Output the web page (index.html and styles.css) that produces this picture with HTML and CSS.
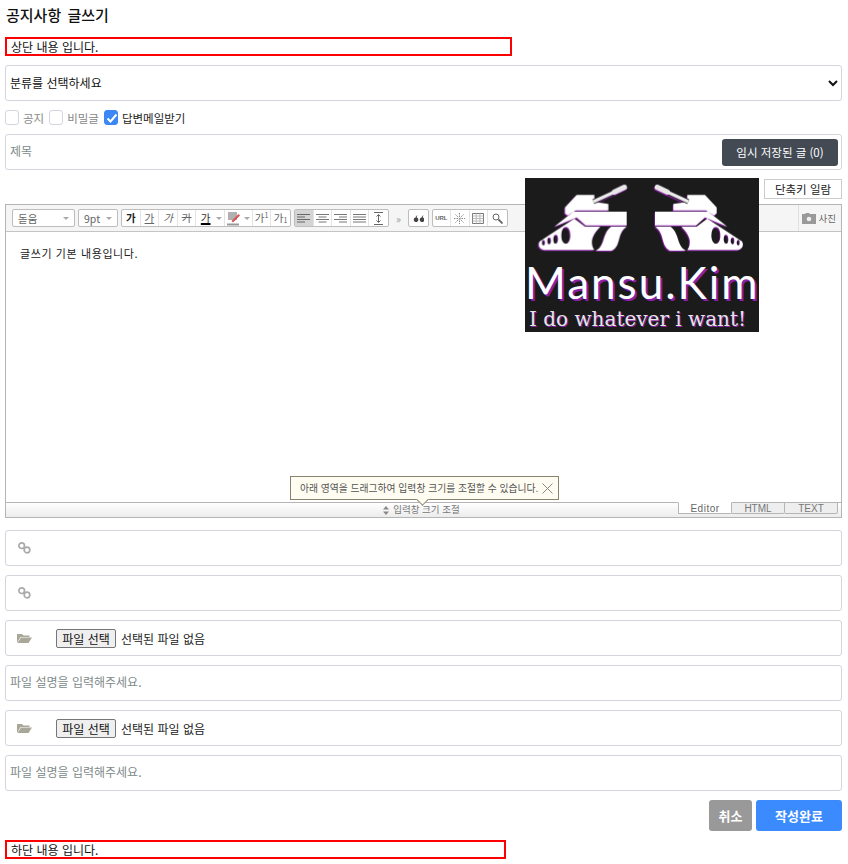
FILE: index.html
```html
<!DOCTYPE html>
<html lang="ko">
<head>
    <meta charset="UTF-8">
    <title>공지사항 글쓰기</title>
    <link rel="stylesheet" href="styles.css">
</head>
<body>
    <svg class="sprites" width="0" height="0">
        <defs>
            <g id="link-icon" fill="none" stroke="#aaa" stroke-width="1.700">
                <circle cx="3.700" cy="3.700" r="2.800"/>
                <circle cx="9" cy="8" r="2.800"/>
            </g>
            <path id="folder-icon" d="M0 1h5l1.500 1.500h6v1.500h-9l-3.500 6zM0.500 10l3.500-5.500h11l-3.500 5.500z" fill="#a9a79a"/>
            <g id="tank">
                <path d="M120 106V88L155 51H208V72L250 78V97H152L128 112Z" fill="#fff"/>
                <path d="M205 71L272 40" stroke="#1b1b1b" stroke-width="15"/>
                <path d="M205 71L272 40" stroke="#eee" stroke-width="10"/>
                <path d="M268 42L298 28" stroke="#e8e8e8" stroke-width="16" stroke-linecap="round"/>
                <path d="M88 146L145 101H305V142H182L155 118Z" fill="#fff"/>
                <path fill-rule="evenodd" fill="#fff" d="M44 190L148 122L180 146H226C200 170 194 196 208 216H58C42 214 38 200 44 190ZM123 147C113 147 109 160 109 174C109 188 115 197 122 197C130 197 136 186 136 172C136 158 131 147 123 147ZM92 170C87 170 85 177 85 184C85 192 87 197 92 197C97 197 99 190 99 183C99 176 97 170 92 170ZM72 178C68 178 67 183 67 189C67 195 69 199 72 199C76 199 78 194 78 188C78 183 76 178 72 178ZM55 186C52 186 51 190 51 194C51 199 52 202 55 202C58 202 60 198 60 193C60 189 58 186 55 186Z"/>
                <path d="M305 146H258C230 168 242 204 212 218H260C290 204 274 166 305 146Z" fill="#fff"/>
            </g>
        </defs>
    </svg>

    <div class="logo-overlay">
        <svg class="logo-tanks" viewBox="0 0 702 240">
            <g class="tank-shadow">
                <use href="#tank"/>
                <use href="#tank" transform="translate(695 0) scale(-1 1)"/>
            </g>
        </svg>
        <div class="logo-name">Mansu.Kim</div>
        <div class="logo-slogan">I do whatever i want!</div>
    </div>

    <main class="write-page">
        <h1 class="page-title">공지사항 글쓰기</h1>
        <div class="notice-box top-box">상단 내용 입니다.</div>

        <select class="field category-select">
            <option>분류를 선택하세요</option>
        </select>

        <div class="check-row">
            <label class="check-item"><span class="check"></span>공지</label>
            <label class="check-item"><span class="check"></span>비밀글</label>
            <label class="check-item on">
                <span class="check checked">
                    <svg width="16" height="16" viewBox="0 0 16 16"><path d="M3.500 8.500l3 3 6-7" fill="none" stroke="#fff" stroke-width="2"/></svg>
                </span>답변메일받기
            </label>
        </div>

        <div class="field subject-row">
            <input class="plain-input subject-input" type="text" placeholder="제목">
            <button class="temp-btn" type="button">임시 저장된 글 (0)</button>
        </div>

        <div class="shortcut-row">
            <button class="shortcut-btn" type="button">단축키 일람</button>
        </div>

        <section class="editor">
            <div class="toolbar">
                <div class="tool-select font-select">돋움<span class="caret"></span></div>
                <div class="tool-select size-select">9pt<span class="caret"></span></div>
                <div class="tool-group">
                    <span class="tool bold">가</span>
                    <span class="tool underline">가</span>
                    <span class="tool italic">가</span>
                    <span class="tool strike">가</span>
                    <span class="tool color-under">가</span>
                    <span class="drop"><span class="caret"></span></span>
                    <span class="tool no-line">
                        <svg width="15" height="15" viewBox="0 0 15 15"><path d="M2 1h9v8H2z" fill="#b0b0b0"/><path d="M5.500 10l7-7 1.500 1.500-7 7z" fill="#d9534f"/><path d="M1 12.500h12v2H1z" fill="#999"/></svg>
                    </span>
                    <span class="drop"><span class="caret"></span></span>
                    <span class="tool">가<sup>1</sup></span>
                    <span class="tool">가<sub>1</sub></span>
                </div>
                <div class="tool-group">
                    <span class="tool pressed"><svg width="13" height="11" viewBox="0 0 13 11"><path d="M0 1.500h13M0 4h8M0 6.500h13M0 9h8" stroke="#666"/></svg></span>
                    <span class="tool"><svg width="13" height="11" viewBox="0 0 13 11"><path d="M0 1.500h13M2.500 4h8M0 6.500h13M2.500 9h8" stroke="#777"/></svg></span>
                    <span class="tool"><svg width="13" height="11" viewBox="0 0 13 11"><path d="M0 1.500h13M5 4h8M0 6.500h13M5 9h8" stroke="#777"/></svg></span>
                    <span class="tool"><svg width="13" height="11" viewBox="0 0 13 11"><path d="M0 1.500h13M0 4h13M0 6.500h13M0 9h13" stroke="#777"/></svg></span>
                    <span class="tool"><svg width="13" height="13" viewBox="0 0 13 13"><path d="M2 .5h9M2 12.500h9M6.500 3v7M4.500 4.500l2-2 2 2M4.500 8.500l2 2 2-2" fill="none" stroke="#666"/></svg></span>
                </div>
                <span class="more">»</span>
                <div class="tool-group">
                    <span class="tool"><svg width="11" height="7" viewBox="0 0 11 7"><path d="M2.500 7A2.300 2.300 0 0 1 2.500 2.500C3 1.500 3.500 .8 4.500 0C3.900 1 3.700 1.800 3.800 2.600A2.300 2.300 0 0 1 2.500 7ZM8.500 7A2.300 2.300 0 0 1 8.500 2.500C9 1.500 9.500 .8 10.500 0C9.900 1 9.700 1.800 9.800 2.600A2.300 2.300 0 0 1 8.500 7Z" fill="#444"/></svg></span>
                </div>
                <div class="tool-group">
                    <span class="tool url">URL</span>
                    <span class="tool"><svg width="11" height="11" viewBox="0 0 11 11"><path d="M5.500 0v11M0 5.500h11M1.500 1.500l8 8M9.500 1.500l-8 8" stroke="#888" stroke-dasharray="1.500 1"/></svg></span>
                    <span class="tool"><svg width="12" height="11" viewBox="0 0 12 11"><path d="M.5.500h11v10H.5z" fill="#fff" stroke="#777"/><path d="M.5 3h11M.5 5.500h11M.5 8h11M4.200 .5v10M7.900 .5v10" stroke="#bbb"/></svg></span>
                    <span class="tool"><svg width="11" height="11" viewBox="0 0 11 11"><circle cx="4" cy="4" r="3" fill="none" stroke="#666"/><path d="M6.500 6.500l4 4" stroke="#666" stroke-width="1.800"/></svg></span>
                </div>
                <div class="photo-tool">
                    <svg width="14" height="11" viewBox="0 0 14 11"><path d="M0 1h3l1-1h3l1 1h6v10H0z" fill="#999"/><circle cx="7" cy="6" r="2.300" fill="#eee"/></svg>
                    사진
                </div>
            </div>

            <div class="editor-body">글쓰기 기본 내용입니다.</div>

            <div class="tooltip">
                아래 영역을 드래그하여 입력창 크기를 조절할 수 있습니다.
                <svg width="11" height="11" viewBox="0 0 11 11"><path d="M.5.500l10 10M10.500.500l-10 10" stroke="#888"/></svg>
            </div>

            <div class="resize-bar">
                <div class="resize-label">
                    <svg width="6" height="9" viewBox="0 0 6 9"><path d="M3 0L6 3.500H0zM3 9L0 5.500h6z" fill="#888"/></svg>
                    입력창 크기 조절
                </div>
                <div class="mode-tabs">
                    <span class="mode-tab active">Editor</span>
                    <span class="mode-tab">HTML</span>
                    <span class="mode-tab">TEXT</span>
                </div>
            </div>
        </section>

        <div class="field-stack">
            <div class="field icon-row">
                <svg width="13" height="12" viewBox="0 0 13 12"><use href="#link-icon"/></svg>
            </div>
            <div class="field icon-row">
                <svg width="13" height="12" viewBox="0 0 13 12"><use href="#link-icon"/></svg>
            </div>
            <div class="field icon-row file-row">
                <svg class="folder-svg" width="15" height="11" viewBox="0 0 15 11"><use href="#folder-icon"/></svg>
                <button class="file-btn" type="button">파일 선택</button>
                <span>선택된 파일 없음</span>
            </div>
            <div class="field">
                <input class="plain-input" type="text" placeholder="파일 설명을 입력해주세요.">
            </div>
            <div class="field icon-row file-row">
                <svg class="folder-svg" width="15" height="11" viewBox="0 0 15 11"><use href="#folder-icon"/></svg>
                <button class="file-btn" type="button">파일 선택</button>
                <span>선택된 파일 없음</span>
            </div>
            <div class="field">
                <input class="plain-input" type="text" placeholder="파일 설명을 입력해주세요.">
            </div>
        </div>

        <div class="form-actions">
            <button class="btn btn-cancel" type="button">취소</button>
            <button class="btn btn-submit" type="button">작성완료</button>
        </div>

        <div class="notice-box bottom-box">하단 내용 입니다.</div>
    </main>
</body>
</html>
```

FILE: styles.css
```css
* {
    margin: 0;
    padding: 0;
    box-sizing: border-box;
}

body {
    background: #fff;
    color: #111;
    font-family: "Noto Sans CJK KR", "Noto Sans", sans-serif;
    font-size: 12px;
    position: relative;
}

.sprites {
    position: absolute;
}

.write-page {
    padding: 0 6px 0 5px;
}

.page-title {
    font-size: 15px;
    font-weight: 500;
    word-spacing: 2px;
    line-height: 20px;
    padding-top: 5px;
    height: 37px;
    padding-left: 1px;
}

.notice-box {
    border: 2px solid #f00;
    font-size: 12px;
    line-height: 15px;
    padding-left: 4px;
}

.top-box {
    width: 507px;
    height: 19px;
    margin-bottom: 9px;
}

.bottom-box {
    width: 501px;
    height: 19px;
    margin-top: 9px;
}

.field {
    display: block;
    width: 100%;
    height: 36px;
    background: #fff;
    border: 1px solid #d4d4dc;
    border-radius: 3px;
}

.category-select {
    font-family: inherit;
    font-size: 12px;
    color: #111;
    padding: 0 0 2px 0;
    outline: none;
}

.check-row {
    display: flex;
    align-items: center;
    gap: 5px;
    height: 33px;
    color: #888;
    font-size: 11.500px;
}

.check-item {
    display: flex;
    align-items: center;
    gap: 4px;
}

.check-item.on {
    color: #222;
}

.check {
    display: block;
    width: 14px;
    height: 15px;
    border: 1px solid #d4d4dc;
    border-radius: 3px;
}

.check.checked {
    background: #3b87f5;
    border-color: #3b87f5;
}

.check svg {
    display: block;
    margin: -1px;
}

.subject-row {
    display: flex;
    align-items: center;
    padding-right: 3px;
}

.plain-input {
    display: block;
    width: 100%;
    height: 100%;
    border: none;
    outline: none;
    background: transparent;
    font-family: inherit;
    font-size: 12px;
    padding: 0 0 3px 4px;
}

.plain-input::placeholder {
    color: #808a8a;
    opacity: 1;
}

.subject-input {
    flex: 1;
    min-width: 0;
}

.temp-btn {
    width: 116px;
    height: 27px;
    background: #434a54;
    color: #fff;
    border: none;
    border-radius: 3px;
    font-family: inherit;
    font-size: 11.500px;
}

.shortcut-row {
    display: flex;
    justify-content: flex-end;
    height: 34px;
    padding-top: 9px;
}

.shortcut-btn {
    width: 78px;
    height: 20px;
    background: #fff;
    border: 1px solid #ccc;
    font-family: inherit;
    font-size: 11.500px;
    color: #222;
}

.editor {
    position: relative;
    height: 314px;
    border: 1px solid #b5b5b5;
    display: flex;
    flex-direction: column;
}

.toolbar {
    display: flex;
    align-items: center;
    gap: 3px;
    height: 27px;
    flex-shrink: 0;
    padding-left: 6px;
    background: #f5f5f5;
    border-bottom: 1px solid #c4c4c4;
    color: #666;
    font-size: 10.500px;
}

.tool-select {
    display: flex;
    align-items: center;
    justify-content: space-between;
    height: 18px;
    padding: 0 5px 0 5px;
    background: #fff;
    border: 1px solid #bdbdbd;
    border-radius: 2px;
}

.font-select {
    width: 63px;
}

.size-select {
    width: 40px;
}

.caret {
    display: block;
    width: 0;
    height: 0;
    border: 3px solid transparent;
    border-top-color: #aaa;
    border-bottom: none;
}

.tool-group {
    display: flex;
    height: 18px;
    background: #fff;
    border: 1px solid #bdbdbd;
    border-radius: 2px;
}

.tool {
    display: flex;
    align-items: center;
    justify-content: center;
    width: 18.600px;
    border-right: 1px solid #e4e4e4;
    line-height: 1;
}

.tool:last-child,
.tool.no-line {
    border-right: none;
}

.tool.pressed {
    background: #d4d4d4;
}

.tool sup,
.tool sub {
    font-size: 7px;
    line-height: 1;
}

.tool sup {
    align-self: flex-start;
    margin-top: 2px;
}

.tool sub {
    align-self: flex-end;
    margin-bottom: 2px;
}

.bold {
    font-weight: 700;
    color: #222;
}

.underline {
    text-decoration: underline;
}

.italic {
    font-style: italic;
}

.strike {
    text-decoration: line-through;
}

.color-under {
    border-right: none;
    color: #333;
    text-decoration: underline 2px #000;
}

.drop {
    display: flex;
    align-items: center;
    justify-content: center;
    width: 9.600px;
    border-right: 1px solid #e4e4e4;
}

.more {
    width: 13px;
    text-align: center;
    color: #999;
}

.url {
    font-family: "Liberation Sans", sans-serif;
    font-size: 6px;
    font-weight: 700;
}

.photo-tool {
    display: flex;
    align-items: center;
    gap: 3px;
    height: 100%;
    margin-left: auto;
    padding: 0 5px 0 3px;
    border-left: 1px solid #e0e0e0;
    font-size: 9.500px;
}

.editor-body {
    flex: 1;
    padding: 13px 14px;
    font-size: 11px;
    letter-spacing: .6px;
    line-height: 16px;
    color: #222;
}

.tooltip {
    position: absolute;
    left: 284px;
    top: 271px;
    width: 269px;
    height: 24px;
    display: flex;
    align-items: center;
    justify-content: space-between;
    padding: 0 5px 0 9px;
    background: #fffdf2;
    border: 1px solid #8a8270;
    color: #555;
    font-size: 9.800px;
    white-space: nowrap;
}

.tooltip::after {
    content: "";
    position: absolute;
    left: 127px;
    bottom: -5px;
    width: 8px;
    height: 8px;
    background: #fffdf2;
    border-right: 1px solid #8a8270;
    border-bottom: 1px solid #8a8270;
    transform: rotate(45deg);
}

.resize-bar {
    display: flex;
    height: 15px;
    flex-shrink: 0;
    background: linear-gradient(#fff, #ececec);
    border-top: 1px solid #b5b5b5;
    color: #777;
    font-size: 9.500px;
}

.resize-label {
    flex: 1;
    display: flex;
    align-items: center;
    justify-content: center;
    gap: 4px;
    padding-left: 159px;
    line-height: 1;
}

.mode-tabs {
    display: flex;
    height: 12px;
    margin-top: -1px;
    padding-right: 3px;
    font-family: "Liberation Sans", sans-serif;
    font-size: 10px;
    color: #777;
}

.mode-tab {
    width: 53px;
    text-align: center;
    line-height: 11px;
    background: #eee;
    border: 1px solid #b5b5b5;
    border-left: none;
    border-bottom-right-radius: 2px;
}

.mode-tab.active {
    width: 54px;
    height: 12px;
    background: #fff;
    border-top-color: #fff;
    border-left: 1px solid #b5b5b5;
    letter-spacing: .5px;
    color: #666;
}

.field-stack {
    display: flex;
    flex-direction: column;
    gap: 9px;
    margin-top: 12px;
}

.icon-row {
    display: flex;
    align-items: center;
    padding-left: 12px;
}

.file-row {
    padding-left: 11px;
    font-size: 12px;
    color: #222;
}

.folder-svg {
    margin-right: 24px;
}

.file-btn {
    width: 60px;
    height: 19px;
    margin-right: 5px;
    background: #efefef;
    border: 1px solid #767676;
    border-radius: 2px;
    font-family: inherit;
    font-size: 12px;
    color: #111;
}

.form-actions {
    display: flex;
    justify-content: flex-end;
    gap: 4px;
    margin-top: 9px;
}

.btn {
    height: 31px;
    border: none;
    border-radius: 3px;
    color: #fff;
    font-family: inherit;
    font-size: 13px;
    font-weight: 700;
}

.btn-cancel {
    width: 43px;
    background: #999;
}

.btn-submit {
    width: 86px;
    background: #3b8bff;
}

.logo-overlay {
    position: absolute;
    left: 525px;
    top: 178px;
    z-index: 5;
    width: 234px;
    height: 154px;
    background: #1b1b1b;
    overflow: hidden;
}

.logo-tanks {
    display: block;
    width: 234px;
    height: 80px;
}

.tank-shadow {
    filter: drop-shadow(-2px 3px 0 #8a1fa8);
}

.logo-name {
    position: absolute;
    left: 0;
    right: 0;
    top: 79px;
    text-align: center;
    font-family: Lato, "Noto Sans", sans-serif;
    font-size: 44px;
    line-height: 50px;
    letter-spacing: 2px;
    color: #fff;
    white-space: nowrap;
    text-shadow: 2px 2px 0 #8a1fa8;
}

.logo-slogan {
    position: absolute;
    left: 4px;
    top: 130px;
    font-family: "DejaVu Serif", serif;
    font-size: 20px;
    line-height: 22px;
    color: #e4e4e4;
    white-space: nowrap;
    text-shadow: 1px 1px 0 #8a1fa8;
}
```
